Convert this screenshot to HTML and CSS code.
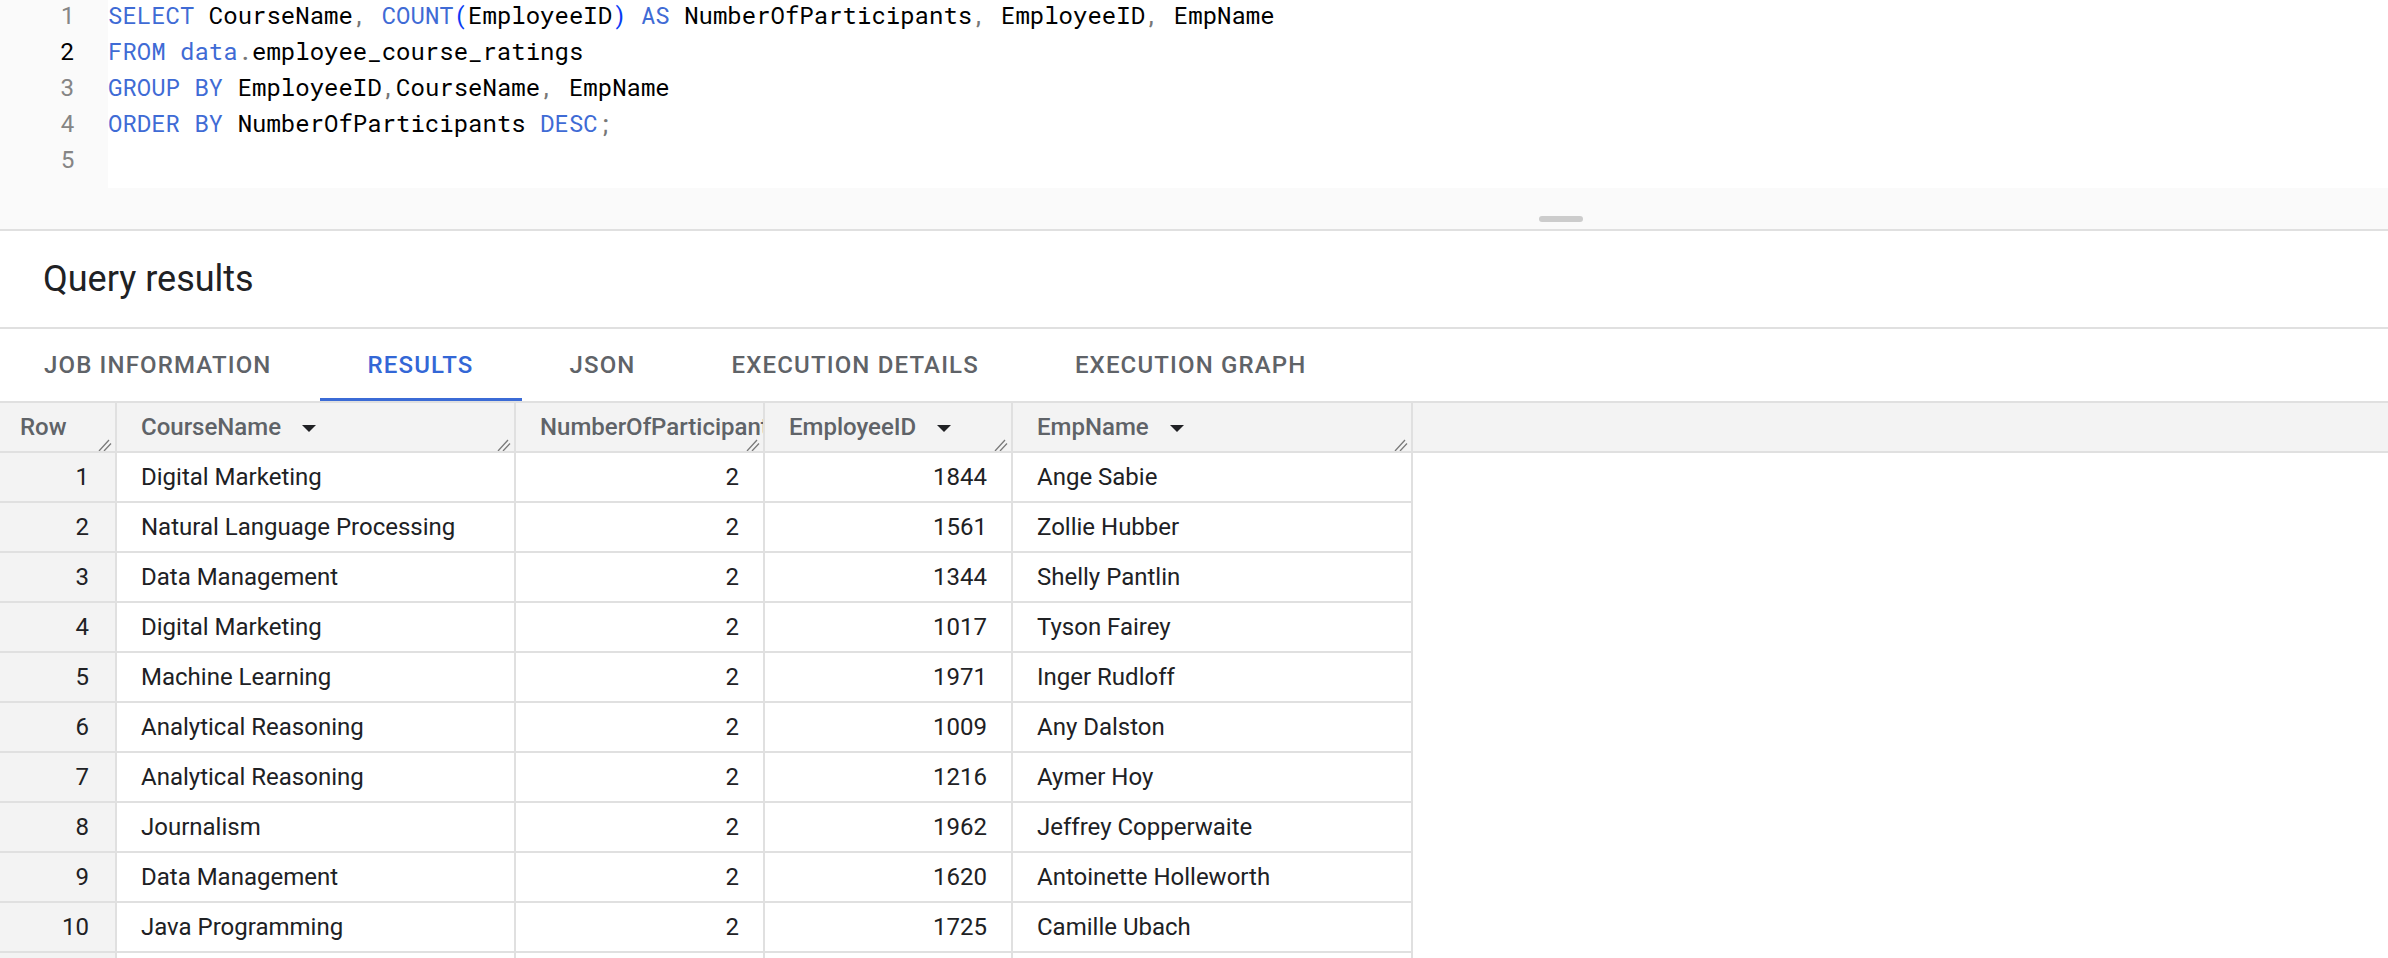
FILE: index.html
```html
<!DOCTYPE html>
<html lang="en">
<head>
<meta charset="utf-8">
<title>Query results</title>
<link rel="stylesheet" href="styles.css">
</head>
<body>
<div class="editor">
  <div class="editor-main">
    <div class="gutter">
      <div class="lines">
        <div class="ln">1</div>
        <div class="ln active">2</div>
        <div class="ln">3</div>
        <div class="ln">4</div>
        <div class="ln">5</div>
      </div>
    </div>
    <div class="code">
      <div class="lines">
        <div class="line"><span class="kw">SELECT</span> CourseName<span class="pu">,</span> <span class="kw">COUNT</span><span class="par">(</span>EmployeeID<span class="par">)</span> <span class="kw">AS</span> NumberOfParticipants<span class="pu">,</span> EmployeeID<span class="pu">,</span> EmpName</div>
        <div class="line"><span class="kw">FROM</span> <span class="kw">data</span><span class="pu">.</span>employee_course_ratings</div>
        <div class="line"><span class="kw">GROUP</span> <span class="kw">BY</span> EmployeeID<span class="pu">,</span>CourseName<span class="pu">,</span> EmpName</div>
        <div class="line"><span class="kw">ORDER</span> <span class="kw">BY</span> NumberOfParticipants <span class="kw">DESC</span><span class="pu">;</span></div>
        <div class="line"> </div>
      </div>
    </div>
  </div>
  <div class="editor-foot"><div class="handle"></div></div>
</div>

<div class="title-bar"><h2 class="title">Query results</h2></div>

<div class="tabs">
  <div class="tab">Job information</div>
  <div class="tab active">Results</div>
  <div class="tab">JSON</div>
  <div class="tab">Execution details</div>
  <div class="tab">Execution graph</div>
</div>

<div class="grid">
  <div class="head">
    <div class="hcell c0 rowhead"><span class="label">Row</span><svg class="grip" viewBox="0 0 14 14" width="14" height="14"><path d="M1 14 L11 3 M6 14 L13 6.5"/></svg></div>
    <div class="hcell c1"><span class="label">CourseName</span><span class="sort"></span><svg class="grip" viewBox="0 0 14 14" width="14" height="14"><path d="M1 14 L11 3 M6 14 L13 6.5"/></svg></div>
    <div class="hcell c2"><span class="label">NumberOfParticipants</span><svg class="grip" viewBox="0 0 14 14" width="14" height="14"><path d="M1 14 L11 3 M6 14 L13 6.5"/></svg></div>
    <div class="hcell c3"><span class="label">EmployeeID</span><span class="sort"></span><svg class="grip" viewBox="0 0 14 14" width="14" height="14"><path d="M1 14 L11 3 M6 14 L13 6.5"/></svg></div>
    <div class="hcell c4"><span class="label">EmpName</span><span class="sort"></span><svg class="grip" viewBox="0 0 14 14" width="14" height="14"><path d="M1 14 L11 3 M6 14 L13 6.5"/></svg></div>
  </div>
  <div class="row"><div class="cell c0 rn">1</div><div class="cell c1">Digital Marketing</div><div class="cell c2 num">2</div><div class="cell c3 num">1844</div><div class="cell c4">Ange Sabie</div></div>
  <div class="row"><div class="cell c0 rn">2</div><div class="cell c1">Natural Language Processing</div><div class="cell c2 num">2</div><div class="cell c3 num">1561</div><div class="cell c4">Zollie Hubber</div></div>
  <div class="row"><div class="cell c0 rn">3</div><div class="cell c1">Data Management</div><div class="cell c2 num">2</div><div class="cell c3 num">1344</div><div class="cell c4">Shelly Pantlin</div></div>
  <div class="row"><div class="cell c0 rn">4</div><div class="cell c1">Digital Marketing</div><div class="cell c2 num">2</div><div class="cell c3 num">1017</div><div class="cell c4">Tyson Fairey</div></div>
  <div class="row"><div class="cell c0 rn">5</div><div class="cell c1">Machine Learning</div><div class="cell c2 num">2</div><div class="cell c3 num">1971</div><div class="cell c4">Inger Rudloff</div></div>
  <div class="row"><div class="cell c0 rn">6</div><div class="cell c1">Analytical Reasoning</div><div class="cell c2 num">2</div><div class="cell c3 num">1009</div><div class="cell c4">Any Dalston</div></div>
  <div class="row"><div class="cell c0 rn">7</div><div class="cell c1">Analytical Reasoning</div><div class="cell c2 num">2</div><div class="cell c3 num">1216</div><div class="cell c4">Aymer Hoy</div></div>
  <div class="row"><div class="cell c0 rn">8</div><div class="cell c1">Journalism</div><div class="cell c2 num">2</div><div class="cell c3 num">1962</div><div class="cell c4">Jeffrey Copperwaite</div></div>
  <div class="row"><div class="cell c0 rn">9</div><div class="cell c1">Data Management</div><div class="cell c2 num">2</div><div class="cell c3 num">1620</div><div class="cell c4">Antoinette Holleworth</div></div>
  <div class="row"><div class="cell c0 rn">10</div><div class="cell c1">Java Programming</div><div class="cell c2 num">2</div><div class="cell c3 num">1725</div><div class="cell c4">Camille Ubach</div></div>
  <div class="row"><div class="cell c0 rn"></div><div class="cell c1"></div><div class="cell c2 num"></div><div class="cell c3 num"></div><div class="cell c4"></div></div>
</div>
</body>
</html>
```
FILE: styles.css
```css
html, body {
  margin: 0;
  padding: 0;
}
body {
  width: 2388px;
  height: 958px;
  overflow: hidden;
  background: #ffffff;
  color: #202124;
  font-family: Roboto, "Noto Sans", "Liberation Sans", sans-serif;
}

/* ---------- editor ---------- */
.editor {
  background: #fafafa;
  border-bottom: 2px solid #e0e0e0;
}
.editor-main {
  display: flex;
  height: 188px;
  overflow: hidden;
}
.gutter {
  width: 108px;
  box-sizing: border-box;
  padding-right: 33px;
  text-align: right;
  font-family: "Roboto Mono", "DejaVu Sans Mono", "Liberation Mono", monospace;
  font-size: 24px;
  line-height: 36px;
  color: #858585;
}
.ln.active {
  color: #000000;
}
.code {
  flex: 1;
  background: #ffffff;
  font-family: "Roboto Mono", "DejaVu Sans Mono", "Liberation Mono", monospace;
  font-size: 24px;
  line-height: 36px;
  color: #000000;
}
.line {
  white-space: pre;
  height: 36px;
}
.lines {
  margin-top: -3px;
}
.kw {
  color: #3f6bd5;
}
.par {
  color: #0a3bf5;
}
.pu {
  color: #777777;
}
.editor-foot {
  height: 41px;
  box-sizing: border-box;
  padding: 28px 0 0 1539px;
}
.handle {
  width: 44px;
  height: 6px;
  border-radius: 3px;
  background: #cccccc;
}

/* ---------- title ---------- */
.title-bar {
  height: 96px;
  border-bottom: 2px solid #e0e0e0;
  display: flex;
  align-items: center;
  padding-left: 43px;
}
.title {
  margin: 0;
  font-size: 36px;
  font-weight: 400;
  color: #202124;
}

/* ---------- tabs ---------- */
.tabs {
  display: flex;
  height: 72px;
  border-bottom: 2px solid #e0e0e0;
}
.tab {
  display: flex;
  align-items: center;
  box-sizing: border-box;
  height: 72px;
  padding: 3px 48px 0;
  border-bottom: 3px solid transparent;
  font-size: 24px;
  font-weight: 500;
  letter-spacing: 1.15px;
  text-transform: uppercase;
  color: #5f6368;
  white-space: nowrap;
}
.tab:first-child {
  padding-left: 44px;
}
.tab.active {
  color: #3367d6;
  border-bottom-color: #3b6bd6;
}

/* ---------- grid ---------- */
.head {
  display: flex;
  height: 50px;
  box-sizing: border-box;
  background: #f3f3f3;
  border-bottom: 2px solid #e0e0e0;
}
.hcell {
  position: relative;
  display: flex;
  align-items: center;
  box-sizing: border-box;
  padding-left: 24px;
  border-right: 2px solid #e0e0e0;
  overflow: hidden;
  white-space: nowrap;
  font-size: 24px;
  font-weight: 500;
  color: #5f6368;
}
.hcell.rowhead {
  padding-left: 20px;
}
.sort {
  flex: none;
  width: 0;
  height: 0;
  margin-left: 21px;
  margin-top: 3px;
  border-left: 7px solid transparent;
  border-right: 7px solid transparent;
  border-top: 7px solid #202124;
}
.grip {
  position: absolute;
  right: 3px;
  bottom: 0;
  fill: none;
  stroke: #7a7a7a;
  stroke-width: 1.3;
}
.c0 { width: 117px; flex: none; }
.c1 { width: 399px; flex: none; }
.c2 { width: 249px; flex: none; }
.c3 { width: 248px; flex: none; }
.c4 { width: 400px; flex: none; }

.row {
  display: flex;
  width: 1413px;
  height: 50px;
  box-sizing: border-box;
  border-bottom: 2px solid #e0e0e0;
}
.cell {
  display: flex;
  align-items: center;
  box-sizing: border-box;
  padding: 0 24px;
  border-right: 2px solid #e0e0e0;
  white-space: nowrap;
  overflow: hidden;
  font-size: 24px;
  color: #202124;
}
.cell.num {
  justify-content: flex-end;
}
.cell.rn {
  justify-content: flex-end;
  padding-right: 26px;
  background: #f3f3f3;
}
```
